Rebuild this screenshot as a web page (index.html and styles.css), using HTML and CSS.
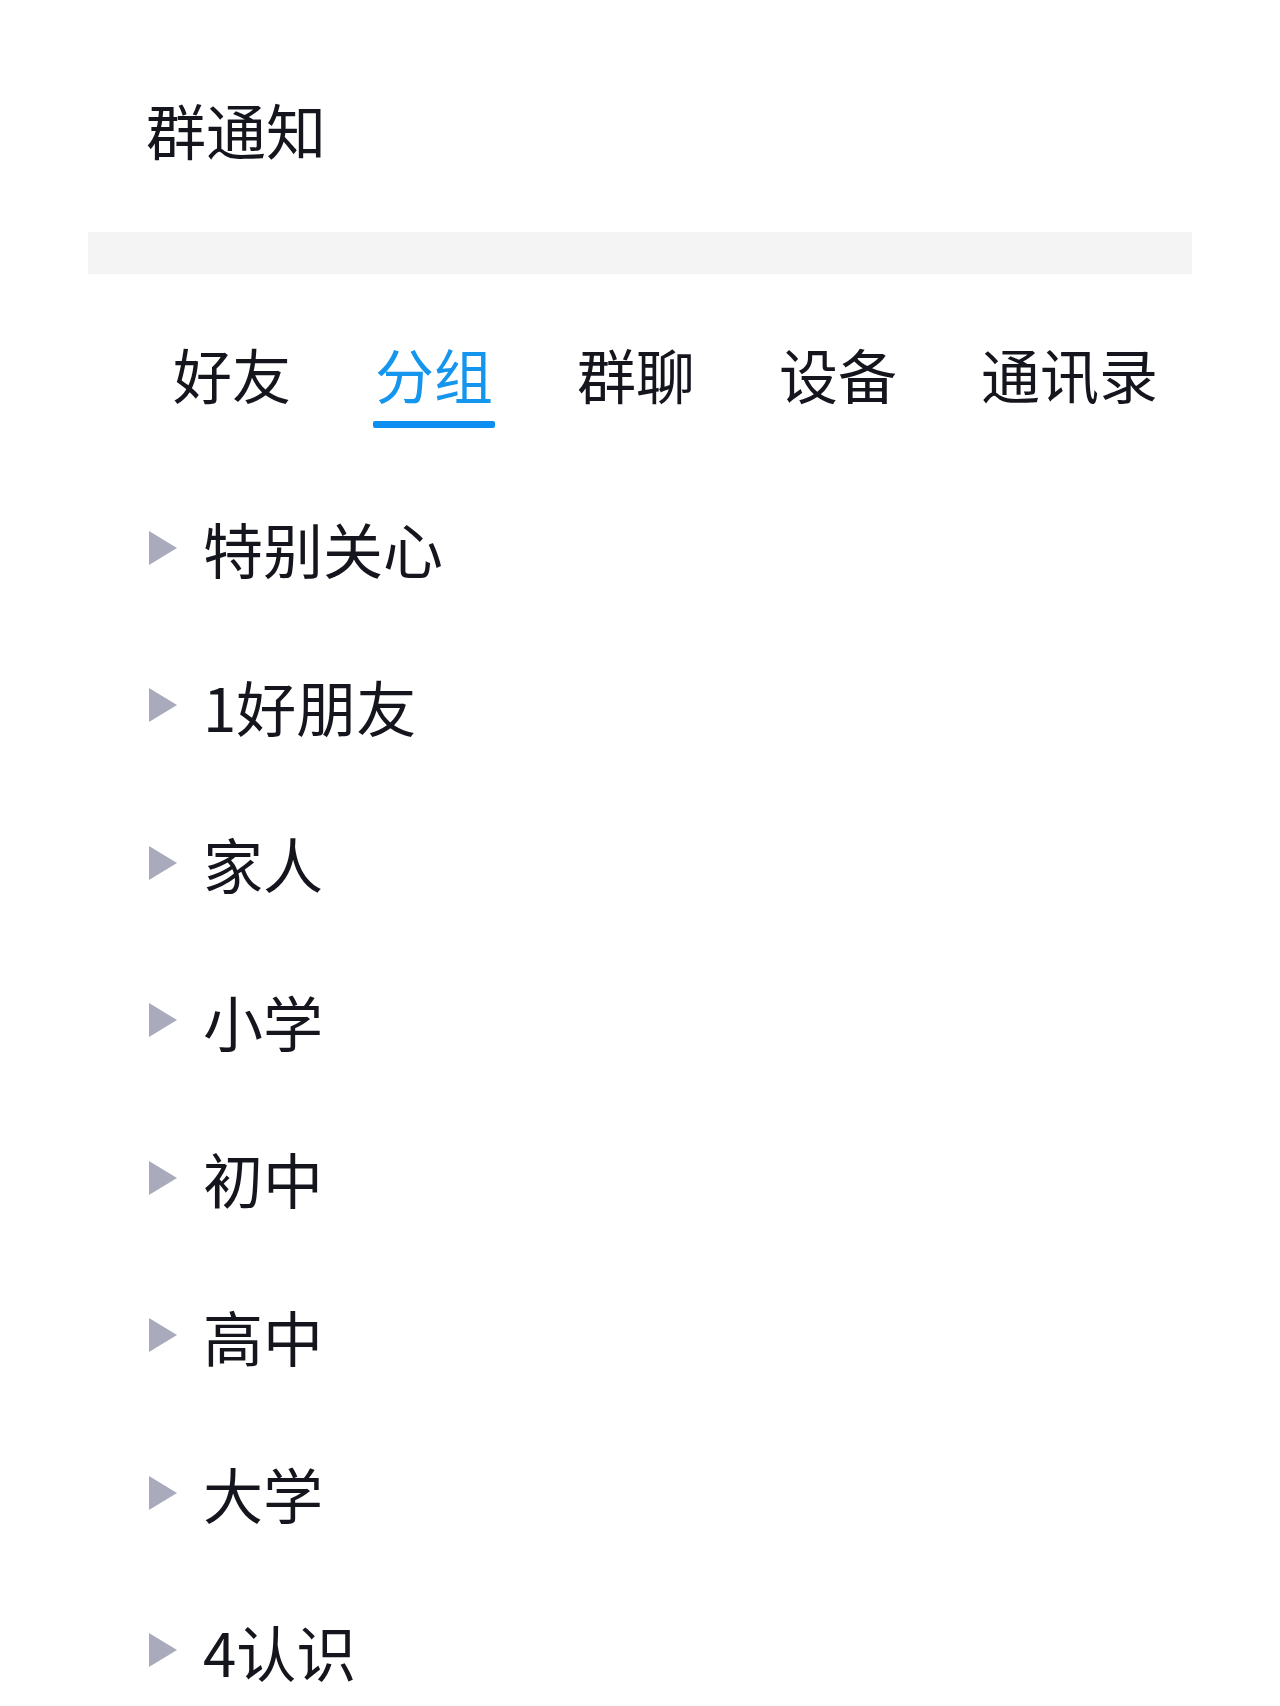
FILE: index.html
```html
<!DOCTYPE html>
<html lang="zh-CN">

<head>
    <meta charset="UTF-8">
    <meta name="viewport" content="width=device-width, initial-scale=1.0">
    <title>联系人</title>
    <link rel="stylesheet" href="styles.css">
</head>

<body>
    <div class="notice-row">群通知</div>

    <div class="divider"></div>

    <div class="tabs">
        <div class="tab">好友</div>
        <div class="tab active">分组</div>
        <div class="tab">群聊</div>
        <div class="tab">设备</div>
        <div class="tab">通讯录</div>
    </div>

    <ul class="group-list">
        <li class="group"><span class="arrow"></span>特别关心</li>
        <li class="group"><span class="arrow"></span>1好朋友</li>
        <li class="group"><span class="arrow"></span>家人</li>
        <li class="group"><span class="arrow"></span>小学</li>
        <li class="group"><span class="arrow"></span>初中</li>
        <li class="group"><span class="arrow"></span>高中</li>
        <li class="group"><span class="arrow"></span>大学</li>
        <li class="group"><span class="arrow"></span>4认识</li>
    </ul>
</body>
</html>
```

FILE: styles.css
```css
body {
    font-family: "Noto Sans CJK SC", "Noto Sans", sans-serif;
    background-color: #ffffff;
    color: #14151d;
    margin: 0;
    padding: 0;
}

.notice-row {
    box-sizing: border-box;
    height: 232px;
    padding: 99px 0 0 146px;
    font-size: 60px;
    line-height: 60px;
}

.divider {
    height: 42px;
    margin: 0 88px;
    background-color: #f4f4f4;
}

/* 顶部切换栏 */
.tabs {
    display: flex;
    gap: 84px;
    padding-left: 173px;
    margin-top: 71px;
}

.tab {
    font-size: 59px;
    line-height: 58px;
    padding-bottom: 25px;
}

.tab.active {
    color: #1596ee;
    padding-bottom: 0;
}

.tab.active::after {
    content: "";
    display: block;
    height: 7px;
    margin: 18px -2px 0;
    border-radius: 2px;
    background-color: #0c8ff0;
}

/* 分组列表 */
.group-list {
    list-style: none;
    margin: 41px 0 0;
    padding: 0 0 0 149px;
}

.group {
    display: flex;
    align-items: center;
    height: 157.5px;
    font-size: 60px;
}

.arrow {
    width: 0;
    height: 0;
    margin-right: 26px;
    border-left: 28px solid #a9abbc;
    border-top: 17px solid transparent;
    border-bottom: 17px solid transparent;
}
```
